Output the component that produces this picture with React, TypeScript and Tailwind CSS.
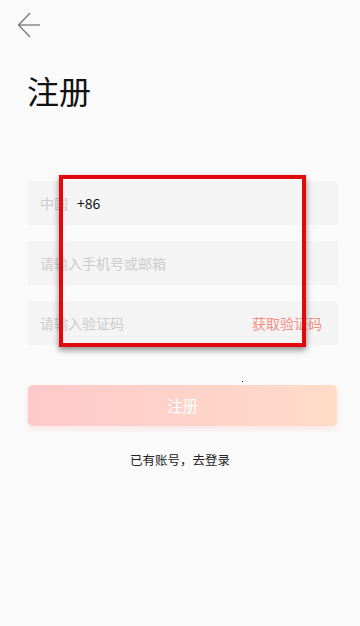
import React from "react";

export default function App() {
  const font = { fontFamily: '"Noto Sans CJK SC", "Noto Sans", sans-serif' };
  return (
    <div className="relative w-[360px] h-[626px] bg-[#fafafa] overflow-hidden" style={font}>
      <div className="pl-[17px] pt-[12px]">
        <svg width="24" height="26" viewBox="0 0 24 26" fill="none" stroke="#777" strokeWidth="1.3">
          <path d="M13 1 L1.5 13 L13 25" />
          <path d="M1.5 13 H23" />
        </svg>
      </div>
      <div className="pl-[27px] mt-[31px] text-[32px] leading-[42px] text-[#111]">注册</div>
      <div className="ml-[28px] w-[310px] mt-[70px] flex flex-col gap-[16px]">
        <div className="h-[44px] bg-[#f4f4f4] flex items-center px-[12px] text-[14px]">
          <span className="text-[#cccccc]">中国</span>
          <span className="ml-[9px] text-[#111]">+86</span>
        </div>
        <div className="h-[44px] bg-[#f4f4f4] flex items-center px-[12px] text-[14px] text-[#cccccc]">
          请输入手机号或邮箱
        </div>
        <div className="h-[44px] bg-[#f4f4f4] flex items-center justify-between pl-[12px] pr-[16px] text-[14px]">
          <span className="text-[#cccccc]">请输入验证码</span>
          <span className="text-[#f3907f]">获取验证码</span>
        </div>
      </div>
      <div className="ml-[28px] w-[309px] mt-[40px] h-[41px] rounded-[5px] bg-gradient-to-r from-[#ffc9c9] to-[#fedcc8] shadow-[0_3px_6px_rgba(255,190,190,0.35)] flex items-center justify-center text-white text-[15.5px]">
        注册
      </div>
      <div className="mt-[25px] text-center text-[12.5px] text-[#222]">已有账号，去登录</div>
      <div className="absolute left-[59px] top-[175px] w-[247px] h-[172px] border-[4px] border-[#e0090b] shadow-[0_3px_6px_rgba(0,0,0,0.45)]" />
      <div className="absolute left-[242px] top-[381px] w-[1px] h-[1px] bg-black" />
    </div>
  );
}
